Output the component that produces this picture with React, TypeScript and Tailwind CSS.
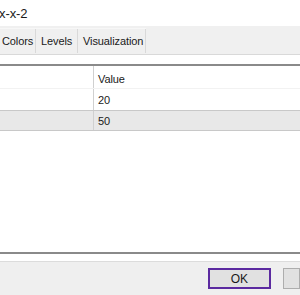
export default function App() {
  return (
    <div className="w-[300px] h-[295px] overflow-hidden bg-white flex flex-col text-[11px] tracking-[-0.1px] text-[#1a1a1a]" style={{ fontFamily: '"Liberation Sans", Arial, sans-serif' }}>
      <div className="h-[26px] flex items-center text-[13px] -ml-[1px] pt-[2px]">x-x-2</div>
      <div className="h-[29px] bg-[#f0f0f0] border-b border-[#d9d9d9] flex items-end">
        <div className="flex h-[25px] mb-[1px] -ml-[3px] border-t border-[#f7f7f7]">
          <div className="w-[39px] pl-[5px] border-r border-[#d9d9d9] flex items-center">Colors</div>
          <div className="w-[42px] pl-[5px] border-r border-[#d9d9d9] flex items-center">Levels</div>
          <div className="w-[68px] pl-[5px] border-r border-[#d9d9d9] flex items-center">Visualization</div>
        </div>
      </div>
      <div className="h-[9px] bg-white" />
      <div className="border-t-2 border-[#8a8a8a]">
        <div className="flex h-[23px] border-b border-[#f2f2f2]">
          <div className="w-[94px] border-r border-[#d0d0d0]" />
          <div className="pl-[4px] pt-[5px]">Value</div>
        </div>
        <div className="flex h-[21px]">
          <div className="w-[94px] border-r border-[#d0d0d0]" />
          <div className="pl-[4px] pt-[3px]">20</div>
        </div>
        <div className="flex h-[21px] bg-[#e8e8e8] border-y border-[#c8c8c8]">
          <div className="w-[94px] border-r border-[#d0d0d0]" />
          <div className="pl-[4px] pt-[2px]">50</div>
        </div>
      </div>
      <div className="flex-1 bg-white" />
      <div className="border-t-2 border-[#8a8a8a] h-[9px] bg-white" />
      <div className="h-[34px] bg-[#efefef] border-t border-[#dcdcdc] flex items-start pt-[6px]">
        <div className="ml-[208px] w-[73px] h-[21px] border-2 border-[#5b2aa0] bg-[#e1e1e1] flex items-center justify-center text-[12px]">OK</div>
        <div className="ml-[12px] w-[20px] h-[21px] border border-[#adadad] bg-[#e1e1e1]" />
      </div>
    </div>
  );
}
